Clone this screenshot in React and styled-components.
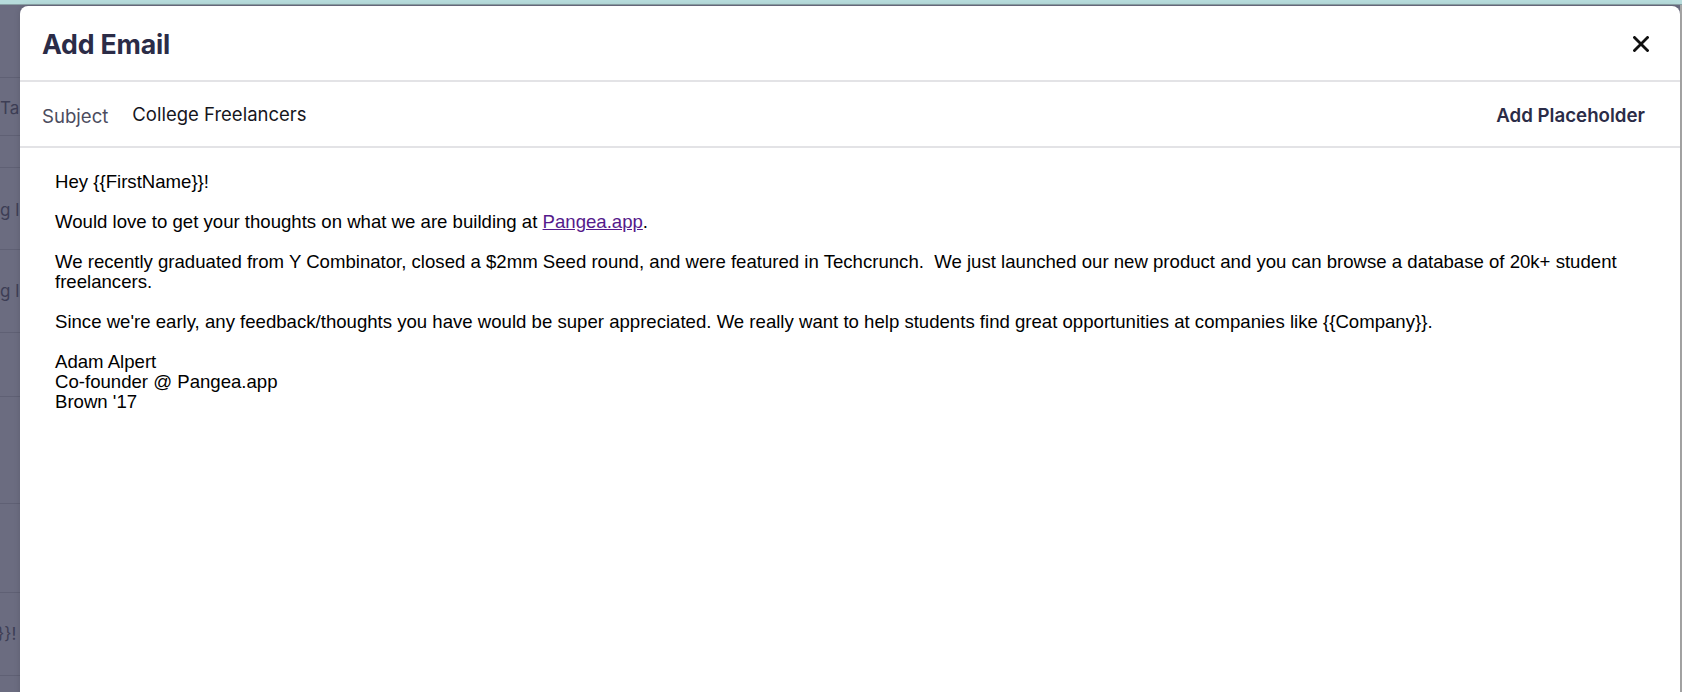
import React from "react";
import styled, { createGlobalStyle } from "styled-components";

const GlobalStyle = createGlobalStyle`
  html, body { margin: 0; padding: 0; }
  body { overflow: hidden; font-family: Inter, "Noto Sans", sans-serif; }
`;

const Page = styled.div`
  position: relative;
  width: 1682px;
  height: 692px;
  overflow: hidden;
  background: #6b6c80;
  display: flex;
  flex-direction: column;
`;

const TopStrip = styled.div`
  height: 4px;
  background: #b7dcdc;
  border-bottom: 1px solid #8aa2a6;
  flex: none;
`;

const Table = styled.div`
  display: flex;
  flex-direction: column;
  flex: 1;
`;

const Row = styled.div`
  height: ${(p) => p.$h}px;
  border-bottom: 1px solid #5f6074;
  display: flex;
  align-items: center;
  box-sizing: border-box;
  color: #3d3e55;
  font-size: 17px;
  white-space: nowrap;
  overflow: hidden;
`;

const RowText = styled.span`
  margin-left: ${(p) => p.$shift || 0}px;
  padding-top: ${(p) => p.$dy || 0}px;
`;

const ScrollEdge = styled.div`
  position: absolute;
  top: 5px;
  right: 0;
  width: 2px;
  bottom: 0;
  background: #a9a9a9;
`;

const Modal = styled.div`
  position: absolute;
  top: 6px;
  left: 20px;
  right: 2px;
  bottom: -20px;
  background: #ffffff;
  border-radius: 8px 8px 0 0;
  box-shadow: 0 0 6px rgba(0, 0, 0, 0.12);
  display: flex;
  flex-direction: column;
`;

const Header = styled.div`
  height: 76px;
  box-sizing: border-box;
  border-bottom: 2px solid #e3e3e6;
  display: flex;
  align-items: center;
  justify-content: space-between;
  padding: 2px 31px 0 22px;
  flex: none;
`;

const Title = styled.h1`
  margin: 0;
  font-family: Inter, sans-serif;
  font-size: 26.7px;
  font-weight: 700;
  color: #2b2c47;
  letter-spacing: -0.2px;
`;

const CloseButton = styled.button`
  border: none;
  background: none;
  padding: 0;
  width: 16px;
  height: 16px;
  display: flex;
  align-items: center;
  justify-content: center;
  cursor: pointer;
  color: #111111;
`;

const SubjectRow = styled.div`
  height: 66px;
  box-sizing: border-box;
  border-bottom: 2px solid #e3e3e6;
  display: flex;
  align-items: center;
  padding: 0 35px 0 22px;
  flex: none;
  font-family: Inter, sans-serif;
`;

const SubjectLabel = styled.span`
  font-size: 18.6px;
  color: #4b4c5e;
  margin-right: 24px;
  padding-top: 3px;
`;

const SubjectValue = styled.span`
  font-size: 18.5px;
  color: #16161d;
  flex: 1;
`;

const PlaceholderButton = styled.button`
  border: none;
  background: none;
  padding: 0;
  font-family: Inter, sans-serif;
  font-size: 18.7px;
  font-weight: 600;
  color: #2b2c47;
  cursor: pointer;
  padding-top: 3px;
`;

const Body = styled.div`
  padding: 24px 35px 0 35px;
  font-family: "Liberation Sans", Arial, sans-serif;
  font-size: 18.6px;
  line-height: 20px;
  color: #000000;
`;

const Para = styled.p`
  margin: 0 0 ${(p) => (p.$tight ? 0 : 20)}px;
`;

const Link = styled.a`
  color: #551a8b;
  text-decoration: underline;
`;

const rows = [
  { h: 73, text: "" },
  { h: 58, text: "Ta", dy: 2 },
  { h: 32, text: "" },
  { h: 82, text: "g l", dy: 2 },
  { h: 83, text: "g l", dy: 0 },
  { h: 64, text: "" },
  { h: 107, text: "" },
  { h: 89, text: "" },
  { h: 83, text: "}}!", shift: -3, dy: 0 },
  { h: 40, text: "" },
];

export default function App() {
  return (
    <>
      <GlobalStyle />
      <Page>
        <TopStrip />
        <Table>
          {rows.map((r, i) => (
            <Row key={i} $h={r.h}>
              <RowText $shift={r.shift} $dy={r.dy}>{r.text}</RowText>
            </Row>
          ))}
        </Table>
        <ScrollEdge />
        <Modal>
          <Header>
            <Title>Add Email</Title>
            <CloseButton aria-label="Close">
              <svg width="16" height="16" viewBox="0 0 16 16">
                <path d="M1.5 1.5 L14.5 14.5 M14.5 1.5 L1.5 14.5" stroke="currentColor" strokeWidth="2.8" strokeLinecap="square" />
              </svg>
            </CloseButton>
          </Header>
          <SubjectRow>
            <SubjectLabel>Subject</SubjectLabel>
            <SubjectValue>College Freelancers</SubjectValue>
            <PlaceholderButton>Add Placeholder</PlaceholderButton>
          </SubjectRow>
          <Body>
            <Para>Hey {"{{FirstName}}"}!</Para>
            <Para>
              Would love to get your thoughts on what we are building at <Link href="#">Pangea.app</Link>.
            </Para>
            <Para>
              We recently graduated from Y Combinator, closed a $2mm Seed round, and were featured in Techcrunch.{"\u00a0"} We just launched our new product and you can browse a database of 20k+ student freelancers.
            </Para>
            <Para>
              Since we're early, any feedback/thoughts you have would be super appreciated. We really want to help students find great opportunities at companies like {"{{Company}}"}.
            </Para>
            <Para $tight>
              Adam Alpert
              <br />
              Co-founder @ Pangea.app
              <br />
              Brown '17
            </Para>
          </Body>
        </Modal>
      </Page>
    </>
  );
}
